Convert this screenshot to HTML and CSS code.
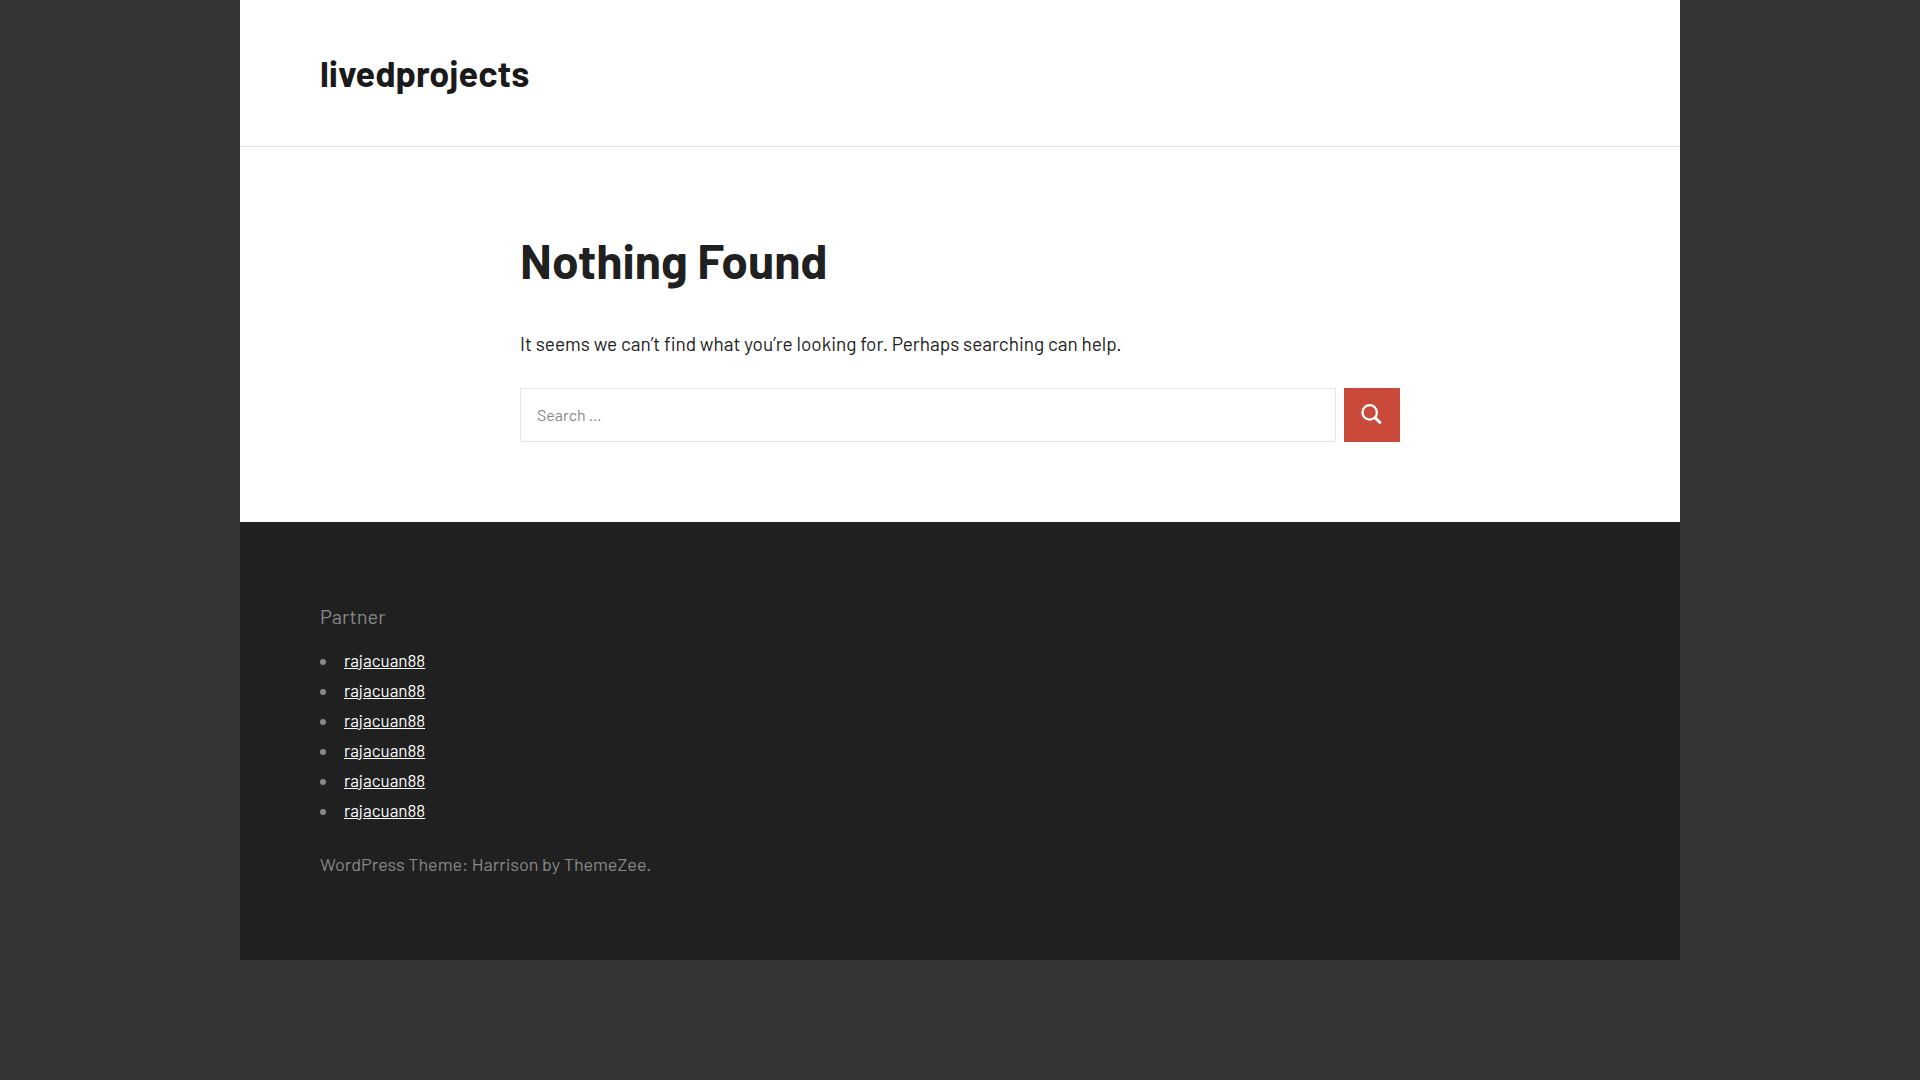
FILE: index.html
```
<!DOCTYPE html>
<html lang="en-US">
<head>
    <meta charset="UTF-8">
    <meta name="viewport" content="width=device-width, initial-scale=1">
    <title>Nothing Found - livedprojects</title>
    <link rel="stylesheet" href="styles.css">
</head>
<body>
    <div class="site">
        <header class="site-header">
            <p class="site-title"><a href="#">livedprojects</a></p>
        </header>

        <main class="site-main">
            <h1 class="page-title">Nothing Found</h1>
            <p class="page-text">It seems we can’t find what you’re looking for. Perhaps searching can help.</p>

            <form class="search-form" role="search">
                <input type="search" class="search-field" name="s" placeholder="Search …" aria-label="Search for:">
                <button type="submit" class="search-submit" aria-label="Search">
                    <svg class="icon-search" viewBox="0 0 24 24" aria-hidden="true">
                        <circle cx="9.7" cy="9.4" r="7.2"></circle>
                        <path class="handle" d="M15 14.7l5.8 5.6"></path>
                    </svg>
                </button>
            </form>
        </main>

        <footer class="site-footer">
            <h2 class="widget-title">Partner</h2>
            <ul class="partner-list">
                <li><a href="#">rajacuan88</a></li>
                <li><a href="#">rajacuan88</a></li>
                <li><a href="#">rajacuan88</a></li>
                <li><a href="#">rajacuan88</a></li>
                <li><a href="#">rajacuan88</a></li>
                <li><a href="#">rajacuan88</a></li>
            </ul>
            <p class="credit">WordPress Theme: Harrison by ThemeZee.</p>
        </footer>
    </div>
</body>
</html>
```

FILE: styles.css
```
* {
    box-sizing: border-box;
}
body {
    margin: 0;
    background: #353535;
    color: #202020;
    font-family: Barlow, Roboto, "Liberation Sans", sans-serif;
    font-size: 18px;
    line-height: 30px;
}
h1, h2, p, ul {
    margin: 0;
    padding: 0;
}
.site {
    max-width: 1440px;
    margin: 0 auto;
    background: white;
}

/* Header */
.site-header {
    padding: 48px 80px;
    border-bottom: 1px solid #e4e4e4;
}
.site-title {
    font-size: 36px;
    font-weight: bold;
    line-height: 50px;
}
.site-title a {
    color: #1a1a1a;
    text-decoration: none;
}

/* Content */
.site-main {
    max-width: 1040px;
    margin: 0 auto;
    padding: 80px;
}
.page-title {
    font-size: 48px;
    font-weight: bold;
    line-height: 66px;
}
.page-text {
    margin: 33px 0 27px;
    font-size: 19px;
    line-height: 35px;
}
.search-form {
    display: flex;
    gap: 8px;
}
.search-field {
    flex: 1;
    min-width: 0;
    height: 54px;
    padding: 0 16px 2px;
    border: 1px solid #e4e4e4;
    border-radius: 0;
    background: white;
    color: #202020;
    font-family: inherit;
    font-size: 16px;
    appearance: none;
}
.search-field::placeholder {
    color: #888;
}
.search-submit {
    display: flex;
    align-items: center;
    justify-content: center;
    width: 56px;
    padding: 0;
    border: none;
    background: #c9493b;
    cursor: pointer;
}
.icon-search {
    width: 24px;
    height: 24px;
    fill: none;
    stroke: white;
    stroke-width: 2.3;
}
.icon-search .handle {
    stroke-width: 3;
}

/* Footer */
.site-footer {
    padding: 79px 80px 81px;
    background: #202020;
    color: #888;
}
.widget-title {
    margin-bottom: 14px;
    font-size: 20px;
    font-weight: normal;
}
.partner-list {
    margin-bottom: 24px;
    list-style: disc inside;
    font-size: 17px;
}
.partner-list a {
    color: white;
}
```
